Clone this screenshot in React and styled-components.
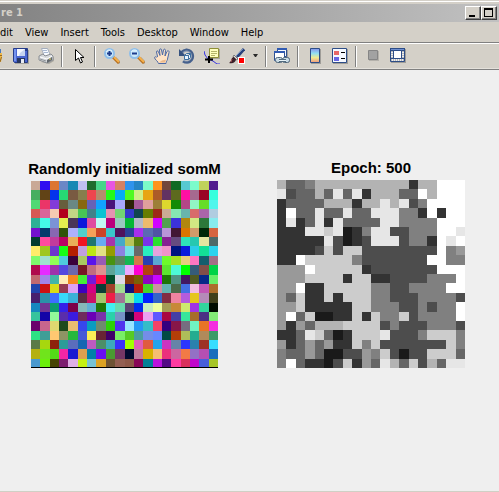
import React from 'react';
import styled, { createGlobalStyle } from 'styled-components';

const GlobalStyle = createGlobalStyle`
  * { box-sizing: border-box; }
  body { margin: 0; background: #efefef; }
`;

const uiFont = '"DejaVu Sans Condensed", "DejaVu Sans", sans-serif';

const Window = styled.div`
  min-height: 100vh;
  display: flex;
  flex-direction: column;
  overflow: hidden;
  background: #d4d0c8;
  border-bottom: 1px solid #d0d0c5;
  font-family: ${uiFont};
`;

const FrameEdge = styled.div`
  height: 4px;
  border-top: 1px solid #d4d0c8;
  border-bottom: 2px solid #d4d0c8;
  background: #ffffff;
`;

const TitleBar = styled.header`
  display: flex;
  align-items: center;
  justify-content: space-between;
  height: 18px;
  padding: 0 2px 0 1px;
  background: linear-gradient(to right, #838383, #c1c1c1);
`;

const WindowTitle = styled.h1`
  margin: 0;
  font-size: 11px;
  line-height: 18px;
  font-weight: bold;
  color: #d4d0c8;
`;

const WindowButtons = styled.div`
  display: flex;
`;

const WindowButton = styled.button`
  width: 16px;
  height: 14px;
  padding: 0;
  display: flex;
  border: 1px solid;
  border-color: #ffffff #404040 #404040 #ffffff;
  box-shadow: inset -1px -1px 0 #808080;
  background: #d4d0c8;
`;

const MenuBar = styled.nav`
  display: flex;
  gap: 12px;
  height: 20px;
`;

const MenuButton = styled.button`
  padding: 1px 0 0;
  border: 0;
  background: none;
  font-family: ${uiFont};
  font-size: 11px;
  line-height: 19px;
  color: #000000;
`;

const Toolbar = styled.div`
  display: flex;
  align-items: center;
  height: 28px;
  border-top: 1px solid #808080;
  border-bottom: 1px solid #808080;
  box-shadow: inset 0 1px 0 #ffffff, inset 0 -1px 0 #e4e1db;
`;

const ToolButton = styled.button`
  flex: none;
  width: ${(p) => p.$width || 25}px;
  height: 24px;
  padding: 0;
  border: 0;
  background: none;
  display: flex;
  align-items: center;
  justify-content: center;
`;

const Separator = styled.span`
  flex: none;
  width: 2px;
  height: 21px;
  margin: 0 3px;
  background: #ffffff;
  border-left: 1px solid #808080;
`;

const Canvas = styled.main`
  flex: 1;
  display: grid;
  grid-template-columns: repeat(2, minmax(0, 1fr));
  align-content: start;
  align-items: end;
  column-gap: 58px;
  padding: 90px 34px 40px 31px;
  background: #efefef;
`;

const Plot = styled.figure`
  margin: 0;
  padding-right: ${(p) => p.$inset || 0}px;
`;

const PlotTitle = styled.figcaption`
  display: flex;
  justify-content: center;
  font-family: "Liberation Sans", Arial, sans-serif;
  font-size: 15px;
  line-height: 16px;
  padding-bottom: 4px;
  font-weight: bold;
  white-space: nowrap;
  color: #000000;
`;

const Map = styled.svg`
  display: block;
  width: 100%;
  aspect-ratio: 1;
`;

const colorRows = [
  'c9a996 2f0df0 dc7530 6a87c6 1687b4 c0bff2 1f6b2d 48d58a e755e0 d58162 2f93ec 2585c4 7cfbc8 ff931e 71463a 116a24 57c9d2 7bfbcb c0d25c 531d8e',
  '47ae60 614316 0432ec 26d874 795a42 877e4d ee464e b38c6c 23fa17 05acf2 4ffa20 d0ee88 e8a513 ac5b28 623262 5d6a1e ff0fa3 a6698f 9a0425 36ffdd',
  '50d974 eb3568 823ad9 675e3d 6a8883 876710 6662b7 12a2ff 481279 a9a8fc 2b2208 a75a9c e0a09c 9d7f37 ded82d 138a05 b34687 91f5c5 66dd27 50f6ec',
  'd85954 d9659a f4cab2 b2001d c2d585 47c556 41828a 0bc3d3 e393b1 72d472 3439ca 10454f 667d00 9d2a18 cbab95 86e7b2 68b5ac d86b6b ab65aa b0cce0',
  '2cb196 44fce8 7b93d6 e4ee50 4a3558 0e18da df4d9f c2f9f3 bb007c 99c8c0 04b635 b3b9c7 ecba6c d203ff 51a150 3b32db b1870e d2e983 2d783a 88ebef',
  '7310cd 043a6c 8867b1 305309 aeb1fe 52cecb f7a059 cb4327 3ac5cb 4f125c 2b4097 a82eed 5a6ab1 5153a5 b995d9 421735 db7600 d29a6a 012707 d66440',
  '033b2f ff4a9f c23b9b b90364 e9af58 f11422 20766f 68abf2 a735ab 45aac8 b8c55b 587e10 7a34ea 2be02f 852192 674b80 2fe3b9 26c8b0 e6e5a0 4e6a69',
  'ffec6a 9fc620 6d37cd 17fb17 b51e00 c0a0df bde515 e2e183 949c00 8c82e2 74e2e4 696969 2aeec0 e6a2dd ef92ca 001480 0a1bdc 2bcde9 13df96 2dd3ed',
  '7efa6c 9fe0cf 90ff56 4fcadd 3a023a a9ca61 5914eb 985bb5 489311 5b845e 15b654 d4784a 293fb1 5aa9d3 6dfb2a a8e021 e9cf7e ff76c1 145e6d a36f86',
  'af0b4d e62aff 9e31ab 5347df 6c68ac 761925 c06c80 e0918f 5ca598 5bbdc8 ecabff ff00d0 b3430c 8e1458 5ce52f 4dfad6 00ff00 365c7a 824f48 00d348',
  'c06a70 a283e8 43b5a6 ffecb6 f48820 43ef37 7419da ff0c49 034d2b dddae7 89390b 7a6005 9003bd c806ff 1f7507 509483 421861 505a22 082888 69ef69',
  '2145ac cb1212 d9dc16 963b52 dda2f4 3d00bf d40283 0b3e36 a14229 a2dc93 12117a b21c0b 44d52b cc90a1 62b5b1 4b6b4a 436fe2 f1bee0 c256b4 ad6e2c',
  '47206e 2b92a8 3e6dff 38d9fa 3bb0d7 592e42 cb1265 a5c76e ef1f47 a07794 99ed8f 06d9ed 0022ff 3464c6 822c43 ee84a0 b45cdd e5c61d b58ab8 40401b',
  '1687bf 723594 0c9b6d 3522e8 7c0248 86b9b8 62b0d3 1f7806 44efef 67dcaf 5a4572 002ced c6edc1 f0ffa0 a49b54 c88938 cde96e a034e6 31d49c 000c00',
  '37c49d 1404a7 92fa9a 5a2dab 3b1bdf 6f2b5d 6a00b5 7a33ab 2bd1a9 7693c5 0a1334 d40479 eba0f1 6057ff a90643 443ea6 36e69c a66d2a 4b2f84 83eb77',
  '6a006c c8658d dfd870 1f4a1c e9bd70 3747ed 0a9cc0 6e8b6d 2cd307 5033ef 98e4ff 2498f5 34bdc8 f44368 34007f 871648 766e80 70f3c1 e87426 f52de0',
  '2de184 3f9e97 ffc871 8e9464 26b83c 465bd6 faef57 682534 400069 79ee67 56cb23 4a9ea0 748de8 6788ff 024a43 b43e08 aebd59 24ac90 b08a5b 3c9a68',
  '5b7a47 a7d70e 8f220c 2c9b98 5b6dbc 1566b2 bd5bc0 4c8e68 3daabb 3a30fa a2ff00 df5eb7 e05b3f 24a4ea cb34c1 6684a8 2b36ff 2b81ad 9e3125 37ddff',
  'b5b010 70e41c 53da17 f226a5 191ad0 dca04f 0080a8 6910f1 4a9b31 753665 02092f bf7a9c d8b300 f5be73 eb307c cc66a0 f27a46 9371c5 b54fb2 186ebc',
  '4a99cf 6bef0c 454403 7d1d70 deb0e6 c5f012 77c2d4 dca223 6e5334 935f52 8d5848 880657 028196 ba13dd 530b85 ff3ba1 d9305b c006cb 485fda a6c527',
].map((row) => row.split(' ').map((c) => `#${c}`));

const grays = {
  1: '#1a1a1a', 3: '#333333', 4: '#4d4d4d', 6: '#666666', 8: '#808080',
  9: '#999999', b: '#b3b3b3', c: '#cccccc', e: '#e6e6e6', f: '#ffffff',
};

const grayRows = [
  'b668bbbbbbbbbb3bbfff',
  'e466b6e6e3bbb66fbfff',
  '36666bbb3bbebe48ffff',
  '3f66e66e66eee883f3ff',
  '3e36e3e6666ee8888fff',
  '333eece138ee44888ffe',
  '33333e4134eee4883fef',
  '33334c4cc44444444f89',
  '33fccccc84444444ff88',
  '999fccccc34444444fff',
  '999cccc3cc334444888f',
  '99f33ccccc88448888ff',
  '96c33c3ccc8844488884',
  '99c33333cc888448488f',
  '9f6c1133c3c88c48888f',
  '9396bbbcccc484448884',
  '336ec613ccce4448ccc8',
  '93696933c8c4444444c8',
  '86696114498c4144ccc6',
  '8f63314c396eb6c4b6ee',
].map((row) => row.split('').map((k) => grays[k]));

function CellMap({ rows, label, baseline }) {
  return (
    <Map viewBox="0 0 200 200" shapeRendering="crispEdges" role="img" aria-label={label}>
      {rows.map((row, y) =>
        row.map((fill, x) => (
          <rect key={`${x}-${y}`} x={x * 10} y={y * 10} width="10" height="10" fill={fill} />
        ))
      )}
      {baseline && <rect y="199" width="200" height="1" fill="#000000" />}
    </Map>
  );
}

const Icon = ({ children, w = 16, h = 16 }) => (
  <svg width={w} height={h} viewBox={`0 0 ${w} ${h}`} fill="none" aria-hidden="true">
    {children}
  </svg>
);

const OpenIcon = () => (
  <Icon w={8}>
    <path d="M0 1h1v4H0z" fill="#4a78b8" />
    <path d="M0 5h2v4l-1 5H0z" fill="#eeb94a" />
    <path d="M0 7.500h2M1.500 9L0 14" stroke="#9a6a20" />
  </Icon>
);

const SaveIcon = () => (
  <Icon>
    <path d="M2 2h14v14H2z" fill="#a5a39d" />
    <path d="M.5.5h14v14h-13l-1-1z" fill="#4a66d0" stroke="#263c8a" />
    <path d="M1 1h2v12H1z" fill="#7593ee" />
    <path d="M4 1h8v7H4z" fill="#f4f7ff" />
    <path d="M7 5l5-4v7H6z" fill="#c6d4f1" />
    <path d="M4 10h8v5H4z" fill="#263560" />
    <path d="M8 11h3v4H8z" fill="#e8ecf4" />
    <path d="M12 1h2v2h-2z" fill="#273d88" />
  </Icon>
);

const PrintIcon = () => (
  <Icon>
    <path d="M3 14l8 2 5-3v-4z" fill="#aaa79f" />
    <path d="M3.500.500h6l3 7-6 1z" fill="#f8fbff" stroke="#a4adbc" />
    <path d="M5 2.500h4M6 4.500h4" stroke="#a8b8d2" />
    <path d="M1 8l4-2 2 2 6-2 2 2v4l-6 3-8-3z" fill="#d6d9dc" stroke="#8b8f94" />
    <path d="M2 9l7 2 5-3" stroke="#ffffff" />
    <path d="M9 12v3l5-3V9z" fill="#62676d" />
    <path d="M2 11l6 2" stroke="#8f9499" />
    <path d="M11 11h2" stroke="#e4d66a" />
  </Icon>
);

const PointerIcon = () => (
  <Icon>
    <path d="M4.500 1.500v11l3-2.500 2 5 2-1-2-4.500h3.500z" fill="#ffffff" stroke="#000000" />
  </Icon>
);

const ZoomIcon = ({ plus }) => (
  <Icon>
    <path d="M11 10l5 5" stroke="#a5a096" strokeWidth="3" />
    <path d="M9 9l6 6" stroke="#b86f1e" strokeWidth="3" />
    <path d="M10 9l5 5" stroke="#f5b04c" strokeWidth="2" />
    <circle cx="5.500" cy="5.500" r="4.500" fill="#cdeafc" stroke="#8fbfea" strokeWidth="2" />
    <path d="M2 4c1-2 4-3 6-1" stroke="#effaff" />
    <path d={plus ? 'M3 5.500h5M5.500 3v5' : 'M3 5.500h5'} stroke="#1c3c8c" strokeWidth="2" />
  </Icon>
);

const HandIcon = () => (
  <Icon>
    <path
      d="M4.500 15.500c0-2-4-4-4-6 .5-1.500 2-.5 3.500 1L2.500 4c0-1.500 1.500-1.500 2 0L6 7.500 5.500 2c0-1.500 2-1.500 2 0L8.500 7 9.500 2c.5-1.500 2-1 2 .5L11 8l2-4.500c1-1.500 2.500-.5 2 1L13.500 11c-.5 2-1.500 2.500-1.500 4.500z"
      fill="#ffe3c5"
      stroke="#4b69a6"
    />
    <path d="M5 8h7l1 3-2 4H5l-3-5z" fill="#ffe3c5" />
    <path d="M5 14.500h6l1-3-4 1z" fill="#eeb989" />
  </Icon>
);

const RotateIcon = () => (
  <Icon>
    <path d="M3 4.500A6 6 0 1 1 4 13" stroke="#8b9cb5" strokeWidth="3" />
    <path d="M2.500 4A6.500 6.500 0 1 1 4 13.500" stroke="#46608b" strokeWidth="2" />
    <path d="M0 1v7h7L4 5z" fill="#36527f" />
    <path d="M5.500 7.500l2-2h4v4l-2 2h-4zM5.500 7.500h4l2-2M9.500 7.500v4" fill="#eaf6ff" stroke="#3d6f9f" />
  </Icon>
);

const DataCursorIcon = () => (
  <Icon>
    <path d="M0 3l1 4 3 4 5 2 4 3h3" stroke="#3430e4" strokeWidth="1" />
    <path d="M6 1h10v10H6z" fill="#a8a597" />
    <path d="M5.500.5h9v9h-9z" fill="#ffffbd" stroke="#8f8f37" />
    <path d="M7 3.500h6M7 5.500h6M7 7.500h4" stroke="#b4b468" />
    <path d="M1 11.500h8M5 8v7" stroke="#000000" strokeWidth="2" />
  </Icon>
);

const BrushIcon = () => (
  <Icon>
    <path d="M15 1L8 9" stroke="#28427b" strokeWidth="3" />
    <path d="M14 1L7 8" stroke="#7591c0" />
    <path d="M5 7l4 4-2 1-3-3z" fill="#e8e7e2" stroke="#777777" />
    <path d="M5 9c-3 0-2 4-5 6 4 1 7-1 7-4z" fill="#3b2029" />
    <path d="M3 11l-1 3" stroke="#a7585b" />
    <path d="M9 9h7v7H9z" fill="#ffffff" />
    <path d="M10 10h5v5h-5z" fill="#ff0000" />
  </Icon>
);

const CaretIcon = () => (
  <Icon w={6} h={4}>
    <path d="M0 0h5L3 3H2z" fill="#2a2a2a" />
  </Icon>
);

const LinkIcon = () => (
  <Icon>
    <path d="M5 2h9v9H5z" fill="#a5a39d" />
    <path d="M3.500.5h9v8h-9z" fill="#f5f9ff" stroke="#2e5090" />
    <path d="M3 0h10v2H3z" fill="#315bb2" />
    <path d="M.500 4.500h10v8H.5z" fill="#ffffff" stroke="#2e5090" />
    <path d="M0 3h11v2H0z" fill="#315bb2" />
    <rect x="1.500" y="9.500" width="7" height="5" rx="2" fill="#c8dae4" stroke="#50677b" />
    <rect x="8.500" y="9.500" width="7" height="5" rx="2" fill="#c8dae4" stroke="#50677b" />
    <path d="M5 12.500h7" stroke="#e9f4f8" strokeWidth="2" />
    <path d="M5 11.500h7M5 13.500h7" stroke="#526b80" />
  </Icon>
);

const ColorbarIcon = () => (
  <Icon>
    <defs>
      <linearGradient id="spectrum" x2="0" y2="1">
        <stop stopColor="#8491ed" />
        <stop offset=".35" stopColor="#91e0f2" />
        <stop offset=".65" stopColor="#eeeb92" />
        <stop offset="1" stopColor="#f0987f" />
      </linearGradient>
    </defs>
    <path d="M4 1h10v15H4z" fill="#9f9d98" />
    <path d="M3.500.5h9v14h-9z" fill="url(#spectrum)" stroke="#2d4d87" />
  </Icon>
);

const LegendIcon = () => (
  <Icon>
    <path d="M1 1h15v15H1z" fill="#9f9d98" />
    <path d="M.500.5h14v14H.5z" fill="#f6f9ff" stroke="#2d4d87" />
    <path d="M2 3h5v4H2z" fill="#e76767" />
    <path d="M2 9h5v4H2z" fill="#6766e5" />
    <path d="M9 4.500h4M9 10.500h4" stroke="#000000" />
  </Icon>
);

const HideToolsIcon = () => (
  <Icon>
    <path d="M4 3h10v10H4z" fill="#b4b1ab" />
    <path d="M3.500 2.500h9v9h-9z" fill="#a2a2a2" stroke="#858585" />
  </Icon>
);

const DockIcon = () => (
  <Icon>
    <path d="M1 1h15v14H1z" fill="#9f9d98" />
    <path d="M.500.500h14v13H.5z" fill="#eceef0" stroke="#2d4d87" />
    <path d="M0 0h15v3H0z" fill="#2d4d87" />
    <path d="M1 1.500h13" stroke="#6f8fd0" />
    <path d="M1 10.500h13" stroke="#2d4d87" />
    <path d="M1 12h13" stroke="#b9b9b9" strokeWidth="2" strokeDasharray="1 1" />
    <path d="M2 3v7M13 3v7" stroke="#b9b9b9" strokeWidth="2" strokeDasharray="1 1" />
    <path d="M3.500 2.500h8v8h-8z" fill="#ffffff" stroke="#2d4d87" />
  </Icon>
);

const menus = ['dit', 'View', 'Insert', 'Tools', 'Desktop', 'Window', 'Help'];

const tools = [
  ['Open', OpenIcon, 8],
  ['Save', SaveIcon],
  ['Print', PrintIcon],
  null,
  ['Edit plot', PointerIcon],
  null,
  ['Zoom in', () => <ZoomIcon plus />],
  ['Zoom out', ZoomIcon],
  ['Pan', HandIcon],
  ['Rotate 3D', RotateIcon],
  ['Data cursor', DataCursorIcon],
  ['Brush', BrushIcon],
  ['Brush options', CaretIcon, 13],
  null,
  ['Link plot', LinkIcon, 24],
  null,
  ['Insert colorbar', ColorbarIcon],
  ['Insert legend', LegendIcon],
  null,
  ['Hide plot tools', HideToolsIcon],
  ['Show plot tools', DockIcon],
];

export default function App() {
  return (
    <Window>
      <GlobalStyle />
      <FrameEdge />
      <TitleBar>
        <WindowTitle>re 1</WindowTitle>
        <WindowButtons>
          <WindowButton aria-label="Minimize">
            <Icon w={13} h={12}><path d="M3 8h6v2H3z" fill="#000000" /></Icon>
          </WindowButton>
          <WindowButton aria-label="Maximize">
            <Icon w={13} h={12}><path d="M2 1h9v9H2zM3 3v6h7V3z" fill="#000000" fillRule="evenodd" /></Icon>
          </WindowButton>
        </WindowButtons>
      </TitleBar>
      <MenuBar>
        {menus.map((name) => <MenuButton key={name}>{name}</MenuButton>)}
      </MenuBar>
      <Toolbar role="toolbar">
        {tools.map((tool, i) => {
          if (!tool) return <Separator key={i} />;
          const [label, Glyph, width] = tool;
          return <ToolButton key={label} aria-label={label} $width={width}><Glyph /></ToolButton>;
        })}
      </Toolbar>
      <Canvas>
        <Plot $inset={1}>
          <PlotTitle>Randomly initialized somM</PlotTitle>
          <CellMap rows={colorRows} label="Randomly initialized map" baseline />
        </Plot>
        <Plot>
          <PlotTitle>Epoch: 500</PlotTitle>
          <CellMap rows={grayRows} label="Map after 500 epochs" />
        </Plot>
      </Canvas>
    </Window>
  );
}
